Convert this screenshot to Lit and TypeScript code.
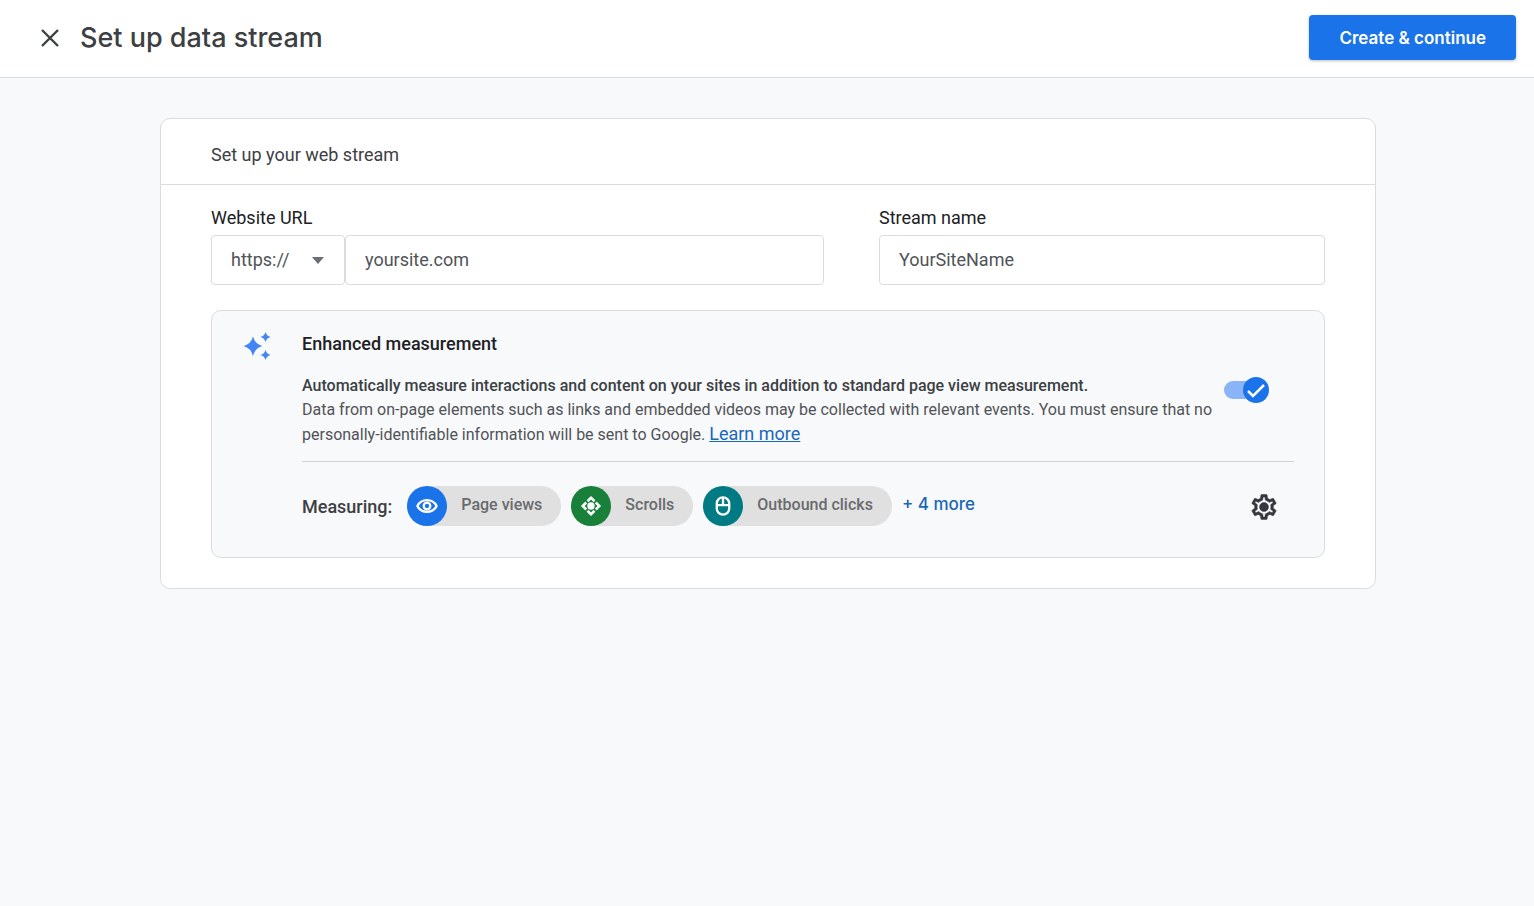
import { LitElement, html, css, svg } from "lit";
import { customElement, property, state } from "lit/decorators.js";

const glyphs: Record<string, unknown> = {
  eye: svg`<path d="M1.500 12C3.500 8 7.500 5.600 12 5.600S20.500 8 22.500 12C20.500 16 16.500 18.400 12 18.400S3.500 16 1.500 12z"/><circle cx="12" cy="12" r="3.600"/>`,
  scroll: svg`<path class="solid" d="M12 1l4.800 4.800-2 2L12 5 9.200 7.800l-2-2zM12 23l-4.800-4.800 2-2L12 19l2.800-2.800 2 2zM1 12l4.800-4.800 2 2L5 12l2.800 2.800-2 2zM23 12l-4.800 4.800-2-2L19 12l-2.800-2.800 2-2z"/><circle class="solid" cx="12" cy="12" r="4"/>`,
  mouse: svg`<rect x="5.200" y="2.500" width="13.600" height="19" rx="6.800"/><path d="M12 2.500v8.500M5.200 11h13.600"/>`,
};

@customElement("measure-chip")
class MeasureChip extends LitElement {
  @property() label = "";
  @property() icon = "eye";

  static styles = css`
    :host {
      display: flex;
      align-items: center;
      height: 40px;
      border-radius: 20px;
      background: #e0e0e0;
      color: #696b6e;
      font-size: 16px;
      font-weight: 500;
      line-height: 20px;
    }
    .disc {
      display: grid;
      place-items: center;
      width: 40px;
      height: 40px;
      border-radius: 50%;
      background: #1a73e8;
    }
    .scroll { background: #188038; }
    .mouse { background: #007b83; }
    svg { width: 22px; height: 22px; fill: none; stroke: #fff; stroke-width: 2.5; }
    .solid { fill: #fff; stroke: none; }
    .name { padding: 0 19px 2px 14px; white-space: nowrap; }
  `;

  render() {
    return html`<span class="disc ${this.icon}"><svg viewBox="0 0 24 24" aria-hidden="true">${glyphs[this.icon]}</svg></span>
      <span class="name">${this.label}</span>`;
  }
}

@customElement("app-root")
class AppRoot extends LitElement {
  @state() private enhanced = true;

  static styles = css`
    :host {
      display: block;
      min-height: 100vh;
      background: #f8f9fb;
      color: #202124;
      font-family: Roboto, sans-serif;
      font-size: 18px;
      line-height: 24px;
    }
    * { box-sizing: border-box; }
    button, input, select { font: inherit; color: inherit; margin: 0; }
    button { border: 0; background: none; padding: 0; cursor: pointer; }
    h1, h2, h3, p { margin: 0; font-weight: 400; }
    .top {
      display: flex;
      align-items: center;
      height: 78px;
      padding: 0 18px 2px 36px;
      background: #fff;
      border-bottom: 1px solid #d9dbde;
    }
    .close { display: flex; margin-right: 16px; }
    .close svg { width: 28px; height: 28px; fill: none; stroke: #3c4043; stroke-width: 2.4; }
    h1 { flex: 1; font: 500 27px/36px Inter, sans-serif; color: #3c4043; }
    .create {
      height: 45px;
      padding: 0 30px;
      border-radius: 4px;
      background: #1a73e8;
      color: #fff;
      font: 600 17px/24px Inter, sans-serif;
      box-shadow: 0 1px 3px rgba(60, 64, 67, 0.35);
    }
    main { padding: 40px 158px 40px 160px; }
    .card { background: #fff; border: 1px solid #dadce0; border-radius: 10px; }
    .card-title {
      padding: 24px 50px 17px;
      border-bottom: 1px solid #dadce0;
      font-size: 18px;
      line-height: 24px;
      color: #3c4043;
    }
    .body { padding: 21px 50px 30px; }
    .fields { display: grid; grid-template-columns: 613fr 446fr; gap: 55px; }
    .fields label { display: block; margin-bottom: 5px; }
    .url { display: flex; }
    .scheme { position: relative; flex: none; width: 134px; }
    .box {
      display: block;
      width: 100%;
      height: 50px;
      padding: 0 19px;
      border: 1px solid #dadce0;
      border-radius: 4px;
      background: #fff;
      color: #505357;
      outline: none;
      appearance: none;
    }
    input.box { padding-bottom: 2px; }
    .scheme svg {
      position: absolute;
      right: 21px;
      top: 22px;
      width: 12px;
      height: 7px;
      fill: #6b6e72;
      pointer-events: none;
    }
    .panel {
      display: flex;
      gap: 30px;
      margin-top: 25px;
      padding: 20px 30px 31px;
      border: 1px solid #dadce0;
      border-radius: 10px;
      background: #f8f9fb;
    }
    .spark { flex: none; width: 30px; height: 30px; fill: #4285f4; }
    .content { flex: 1; }
    h3 { font-size: 18px; font-weight: 500; line-height: 26px; }
    .info { display: flex; justify-content: space-between; padding: 17px 25px 14px 0; border-bottom: 1px solid #d0d3d6; }
    .text { flex: 1; font-size: 16px; line-height: 24px; color: #505357; }
    .text strong { font-weight: 500; color: #3c4043; }
    a { color: #1967b8; font-size: 18px; }
    .toggle { position: relative; display: block; flex: none; width: 45px; height: 26px; margin-top: 3px; cursor: pointer; }
    .toggle input { appearance: none; display: block; width: 42px; height: 18px; margin-top: 4px; border-radius: 9px; background: #8ab4f8; }
    .knob { position: absolute; right: 0; top: 0; width: 26px; height: 26px; border-radius: 50%; background: #1a73e8; pointer-events: none; }
    .knob path { fill: none; stroke: #fff; stroke-width: 2.5; }
    .off input { background: #bdc1c6; }
    .off .knob { right: 19px; background: #80868b; }
    .measures { display: flex; align-items: center; gap: 10px; padding: 24px 15px 0 0; }
    .lead { margin-right: 5px; padding-top: 2px; font-weight: 500; color: #3c4043; }
    .more { color: #1967b8; font: 500 17px/24px Inter, sans-serif; padding-bottom: 5px; }
    .gear { display: flex; margin-left: auto; padding-top: 2px; }
    .gear svg { width: 30px; height: 30px; fill: #36373c; stroke: #36373c; stroke-width: 0.4; }
  `;

  private flip(e: Event) {
    this.enhanced = (e.target as HTMLInputElement).checked;
  }

  render() {
    return html`
      <header class="top">
        <button class="close" aria-label="Close"><svg viewBox="0 0 28 28"><path d="M6 6l16 16M22 6L6 22" /></svg></button>
        <h1>Set up data stream</h1>
        <button class="create">Create &amp; continue</button>
      </header>
      <main>
        <section class="card">
          <h2 class="card-title">Set up your web stream</h2>
          <div class="body">
            <div class="fields">
              <div>
                <label for="url">Website URL</label>
                <div class="url">
                  <div class="scheme">
                    <select class="box" aria-label="Protocol"><option>https://</option><option>http://</option></select>
                    <svg viewBox="0 0 12 7"><path d="M0 0h12L6 7z" /></svg>
                  </div>
                  <input class="box" id="url" type="text" value="yoursite.com" />
                </div>
              </div>
              <div>
                <label for="name">Stream name</label>
                <input class="box" id="name" type="text" value="YourSiteName" />
              </div>
            </div>
            <section class="panel">
              <svg class="spark" viewBox="0 0 30 30" aria-hidden="true">
                <path d="M11 5.500Q13 13 20.500 15Q13 17 11 25Q9 17 1.500 15Q9 13 11 5.500z" />
                <path d="M23.500 1Q24.500 5 28.500 6Q24.500 7 23.500 11Q22.500 7 18.500 6Q22.500 5 23.500 1z" />
                <path d="M23.500 19Q24.500 23 28.500 24Q24.500 25 23.500 29Q22.500 25 18.500 24Q22.500 23 23.500 19z" />
              </svg>
              <div class="content">
                <h3>Enhanced measurement</h3>
                <div class="info">
                  <p class="text">
                    <strong>Automatically measure interactions and content on your sites in addition to standard page view measurement.</strong><br />
                    Data from on-page elements such as links and embedded videos may be collected with relevant events. You must ensure that no personally-identifiable information will be sent to Google.
                    <a href="#">Learn more</a>
                  </p>
                  <label class="toggle ${this.enhanced ? "" : "off"}">
                    <input type="checkbox" role="switch" aria-label="Enhanced measurement" .checked=${this.enhanced} @change=${this.flip} />
                    <svg class="knob" viewBox="0 0 26 26"><path d="M5 14l5 5L21 8" /></svg>
                  </label>
                </div>
                <div class="measures">
                  <span class="lead">Measuring:</span>
                  <measure-chip icon="eye" label="Page views"></measure-chip>
                  <measure-chip icon="scroll" label="Scrolls"></measure-chip>
                  <measure-chip icon="mouse" label="Outbound clicks"></measure-chip>
                  <button class="more">+ 4 more</button>
                  <button class="gear" aria-label="Settings">
                    <svg viewBox="0 0 24 24"><path d="M19.430 12.980c.04-.32.07-.64.07-.98 0-.34-.03-.66-.07-.98l2.110-1.650c.19-.15.24-.42.12-.64l-2-3.460c-.09-.16-.26-.25-.44-.25-.06 0-.12.010-.17.030l-2.490 1c-.52-.4-1.080-.73-1.690-.98l-.38-2.650C14.460 2.180 14.250 2 14 2h-4c-.25 0-.46.18-.49.42l-.38 2.650c-.61.25-1.170.59-1.690.98l-2.490-1c-.06-.02-.12-.03-.18-.03-.17 0-.34.09-.43.25l-2 3.460c-.13.22-.07.49.12.64l2.110 1.650c-.04.32-.07.65-.07.98 0 .33.030.66.070.98l-2.110 1.650c-.19.15-.24.42-.12.64l2 3.460c.09.16.26.25.44.25.06 0 .12-.01.17-.03l2.490-1c.52.4 1.080.73 1.690.98l.38 2.650c.03.24.24.42.49.42h4c.25 0 .46-.18.49-.42l.38-2.650c.61-.25 1.170-.59 1.690-.98l2.490 1c.06.02.12.03.18.03.17 0 .34-.09.43-.25l2-3.460c.12-.22.07-.49-.12-.64zm-1.980-1.710c.04.31.05.52.05.73 0 .21-.02.43-.05.73l-.14 1.130.89.7 1.080.84-.7 1.210-1.270-.51-1.040-.42-.9.68c-.43.32-.84.56-1.250.73l-1.060.43-.16 1.130-.2 1.350h-1.400l-.19-1.350-.16-1.130-1.060-.43c-.43-.18-.83-.41-1.230-.71l-.91-.7-1.060.43-1.270.51-.7-1.210 1.080-.84.89-.7-.14-1.130c-.03-.31-.05-.54-.05-.74s.02-.43.05-.73l.14-1.130-.89-.7-1.080-.84.7-1.210 1.270.51 1.040.42.9-.68c.43-.32.84-.56 1.250-.73l1.060-.43.16-1.130.2-1.350h1.390l.19 1.350.16 1.130 1.060.43c.43.18.83.41 1.230.71l.91.7 1.060-.43 1.270-.51.7 1.210-1.070.85-.89.7zM12 8.400a3.600 3.600 0 1 0 0 7.200 3.600 3.600 0 0 0 0-7.200z" /></svg>
                  </button>
                </div>
              </div>
            </section>
          </div>
        </section>
      </main>
    `;
  }
}
